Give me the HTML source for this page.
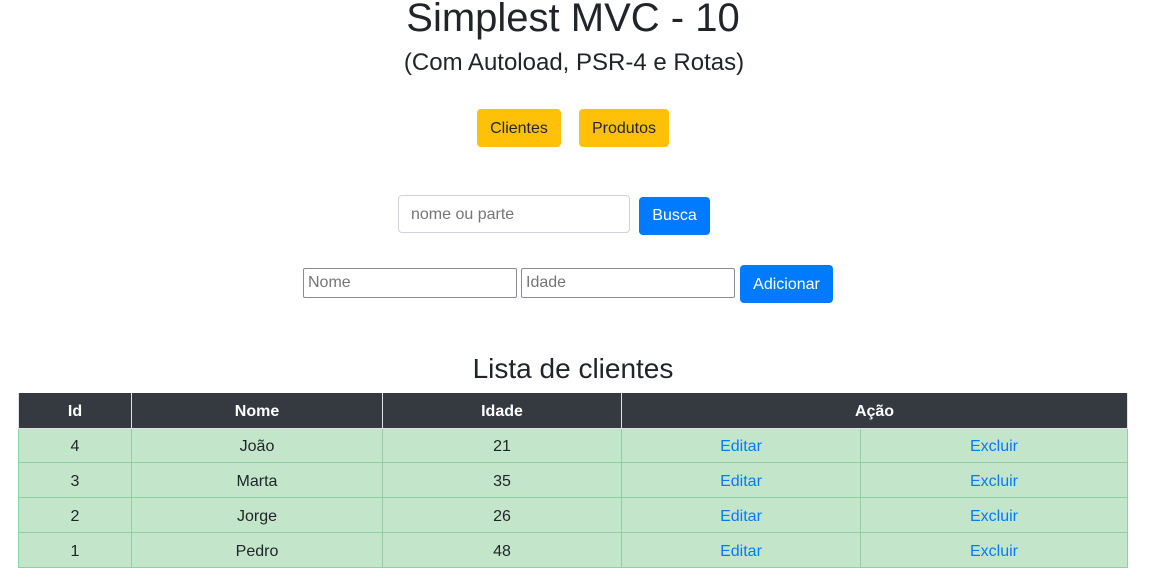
<!DOCTYPE html>
<html><head><meta charset="utf-8"><style>
*{box-sizing:border-box;margin:0;padding:0}
body{width:1152px;height:579px;background:#fff;font-family:"Liberation Sans",sans-serif;color:#212529;position:relative;overflow:hidden}
.a{position:absolute}
.c{text-align:center}
.btn{position:absolute;border-radius:4px;font-size:16px;text-align:center}
.y{background:#ffc107;color:#212529}
.b{background:#007bff;color:#fff}
.inp{position:absolute;border:1px solid #8a8a95;border-radius:2px;font-size:16px;color:#757575;padding-left:4px}
table{position:absolute;left:18px;top:393px;width:1110px;border-collapse:collapse;font-size:16px}
th{background:#343a40;color:#fff;font-weight:bold;height:35px;border:1px solid #dee2e6;border-top:none;padding-top:3px}
td{background:#c3e6cb;border:1px solid #8fd19e;height:34.75px;text-align:center;padding-top:4px}
td a{color:#007bff;text-decoration:none}
</style></head><body>
<div class="a c" style="left:-3px;width:1152px;top:-5px;font-size:40px;line-height:46px">Simplest MVC - 10</div>
<div class="a c" style="left:-2px;width:1152px;top:48px;font-size:24px;line-height:30px">(Com Autoload, PSR-4 e Rotas)</div>
<div class="btn y" style="left:477px;top:109px;width:84px;height:38px;line-height:40px">Clientes</div>
<div class="btn y" style="left:579px;top:109px;width:90px;height:38px;line-height:40px">Produtos</div>
<div class="inp" style="left:398px;top:195px;width:232px;height:38px;line-height:38px;border-color:#ced4da;border-radius:4px;padding-left:12px">nome ou parte</div>
<div class="btn b" style="left:639px;top:197px;width:71px;height:38px;line-height:38px">Busca</div>
<div class="inp" style="left:303px;top:268px;width:214px;height:30px;line-height:28px">Nome</div>
<div class="inp" style="left:521px;top:268px;width:214px;height:30px;line-height:28px">Idade</div>
<div class="btn b" style="left:740px;top:265px;width:93px;height:38px;line-height:40px">Adicionar</div>
<div class="a c" style="left:0;width:1146px;top:352px;font-size:28px;line-height:34px">Lista de clientes</div>
<table>
<tr><th style="width:113px">Id</th><th style="width:251px">Nome</th><th style="width:239px">Idade</th><th colspan="2">Ação</th></tr>
<tr><td>4</td><td>João</td><td>21</td><td style="width:239px"><a>Editar</a></td><td><a>Excluir</a></td></tr>
<tr><td>3</td><td>Marta</td><td>35</td><td><a>Editar</a></td><td><a>Excluir</a></td></tr>
<tr><td>2</td><td>Jorge</td><td>26</td><td><a>Editar</a></td><td><a>Excluir</a></td></tr>
<tr><td>1</td><td>Pedro</td><td>48</td><td><a>Editar</a></td><td><a>Excluir</a></td></tr>
</table>
</body></html>
